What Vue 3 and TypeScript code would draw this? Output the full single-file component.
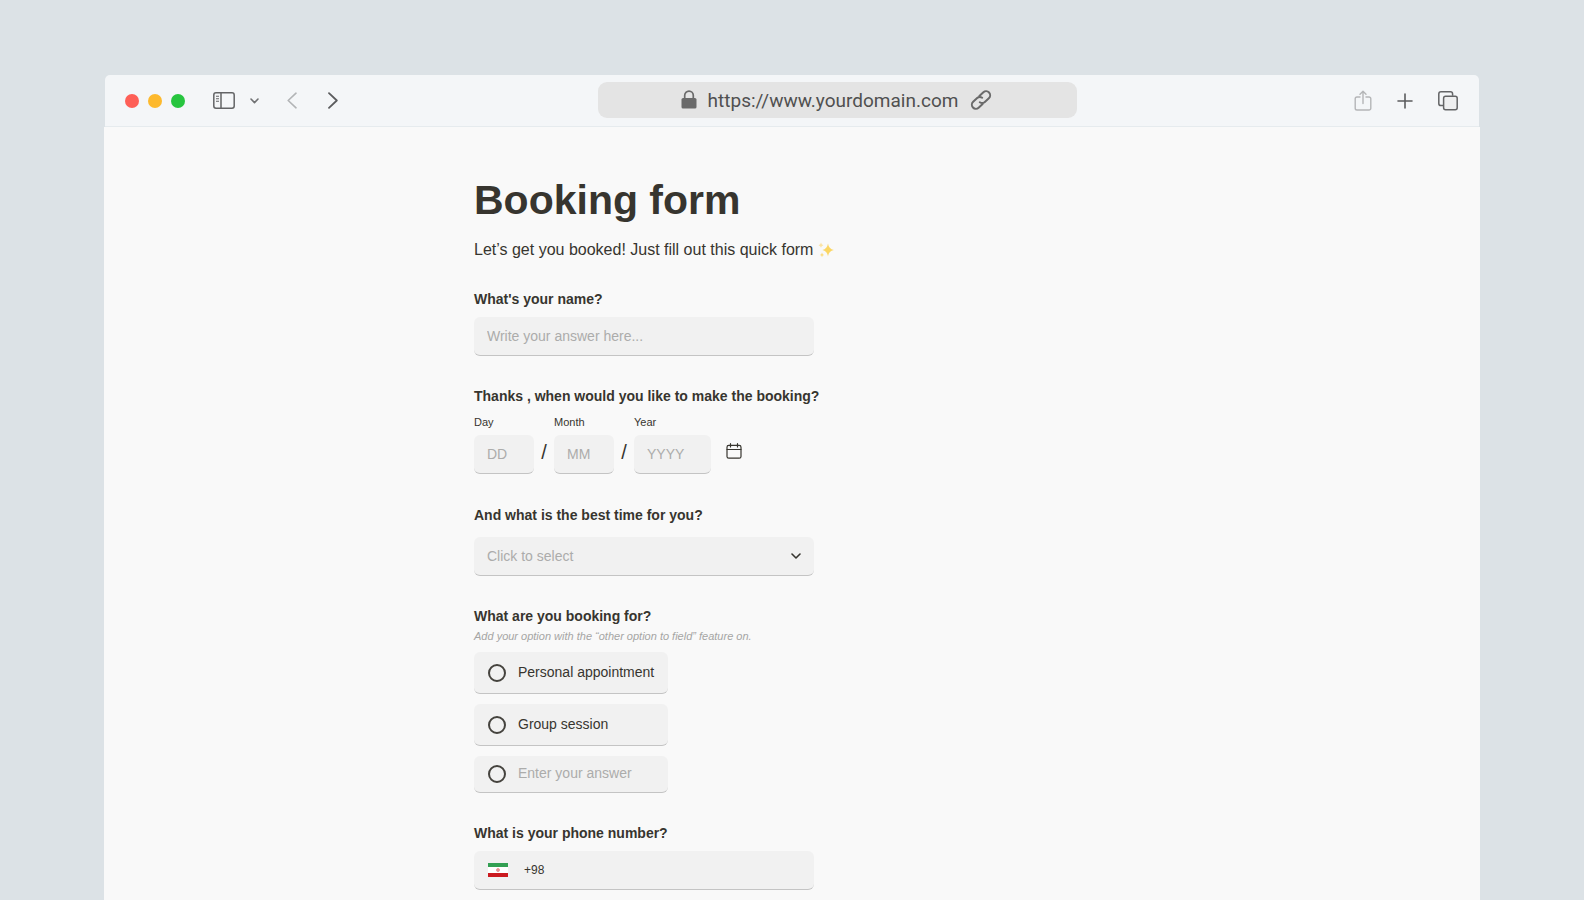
<script setup lang="ts">
import { ref } from 'vue'

interface DatePart {
  id: string
  label: string
  placeholder: string
  wide: boolean
}

interface Option {
  id: string
  label: string
}

const dateParts: DatePart[] = [
  { id: 'day', label: 'Day', placeholder: 'DD', wide: false },
  { id: 'month', label: 'Month', placeholder: 'MM', wide: false },
  { id: 'year', label: 'Year', placeholder: 'YYYY', wide: true },
]

const options: Option[] = [
  { id: 'personal', label: 'Personal appointment' },
  { id: 'group', label: 'Group session' },
]

const address = ref('https://www.yourdomain.com')
const fullName = ref('')
const date = ref<Record<string, string>>({ day: '', month: '', year: '' })
const time = ref('')
const purpose = ref('')
const otherPurpose = ref('')
const phone = ref('+98')
</script>

<template>
  <div class="page">
    <div class="window">
      <header class="toolbar">
        <div class="tools tools-start">
          <div class="lights">
            <button type="button" class="light red" aria-label="Close"></button>
            <button type="button" class="light yellow" aria-label="Minimise"></button>
            <button type="button" class="light green" aria-label="Zoom"></button>
          </div>
          <button type="button" class="tool sidebar" aria-label="Sidebar">
            <svg width="22" height="17" viewBox="0 0 22 17" fill="none" stroke="#636466" stroke-width="1.5">
              <rect x="0.8" y="0.8" width="20.4" height="15.4" rx="2.2" />
              <path d="M8 1v15" />
              <path d="M3 4.2h3M3 6.7h3M3 9.2h3" stroke-width="1.1" />
            </svg>
          </button>
          <button type="button" class="tool chevron" aria-label="Tab groups">
            <svg width="9" height="6" viewBox="0 0 9 6" fill="none" stroke="#707173" stroke-width="1.6" stroke-linecap="round" stroke-linejoin="round">
              <path d="M1 1l3.5 3.6L8 1" />
            </svg>
          </button>
          <button type="button" class="tool back" aria-label="Back">
            <svg width="10" height="17" viewBox="0 0 10 17" fill="none" stroke="#b2b4b6" stroke-width="1.6" stroke-linecap="round" stroke-linejoin="round">
              <path d="M9 1.2L1.2 8.5L9 15.8" />
            </svg>
          </button>
          <button type="button" class="tool forward" aria-label="Forward">
            <svg width="10" height="17" viewBox="0 0 10 17" fill="none" stroke="#5b5c5e" stroke-width="1.8" stroke-linecap="round" stroke-linejoin="round">
              <path d="M1 1.2L8.8 8.5L1 15.8" />
            </svg>
          </button>
        </div>

        <div class="address">
          <svg width="16" height="19" viewBox="0 0 16 19" aria-hidden="true">
            <rect x="0.5" y="8" width="15" height="10.5" rx="1.6" fill="#6a6a6a" />
            <path d="M3.7 9V5.4a4.3 4.3 0 0 1 8.6 0V9" fill="none" stroke="#6a6a6a" stroke-width="1.7" />
          </svg>
          <input v-model="address" class="address-input" type="text" aria-label="Address" />
          <svg width="24" height="24" viewBox="0 0 24 24" fill="none" stroke="#6a6a6a" stroke-width="2" stroke-linecap="round" stroke-linejoin="round" aria-hidden="true">
            <g transform="rotate(-43 12 12)">
              <path d="M10.500 16H5a4 4 0 0 1 0-8h5.500a4 4 0 0 1 3.900 3.200" />
              <path d="M13.500 8H19a4 4 0 0 1 0 8h-5.500a4 4 0 0 1-3.900-3.200" />
            </g>
          </svg>
        </div>

        <div class="tools tools-end">
          <button type="button" class="tool" aria-label="Share">
            <svg width="18" height="22" viewBox="0 0 18 22" fill="none" stroke="#b4b5b7" stroke-width="1.4" stroke-linecap="round" stroke-linejoin="round">
              <path d="M6 7H3a1.8 1.8 0 0 0-1.8 1.8v9.4A1.8 1.8 0 0 0 3 20h12a1.8 1.8 0 0 0 1.8-1.8V8.8A1.8 1.8 0 0 0 15 7h-3" />
              <path d="M9 13.5V1.5M6 4.2L9 1.2l3 3" />
            </svg>
          </button>
          <button type="button" class="tool" aria-label="New tab">
            <svg width="16" height="16" viewBox="0 0 16 16" fill="none" stroke="#5b5c5e" stroke-width="1.6" stroke-linecap="round">
              <path d="M8 1v14M1 8h14" />
            </svg>
          </button>
          <button type="button" class="tool" aria-label="Tab overview">
            <svg width="20" height="20" viewBox="0 0 20 20" fill="none" stroke="#636466" stroke-width="1.5" stroke-linejoin="round">
              <path d="M5.6 14.6H3A2.2 2.2 0 0 1 .8 12.400V3A2.200 2.200 0 0 1 3 .8h9.400A2.200 2.200 0 0 1 14.600 3v1.800" />
              <rect x="5.600" y="5.200" width="13.600" height="13.600" rx="2" fill="#eeeff0" />
            </svg>
          </button>
        </div>
      </header>

      <main class="content">
        <form class="form" @submit.prevent>
          <h1 class="title">Booking form</h1>
          <p class="intro">
            Let’s get you booked! Just fill out this quick form
            <svg class="sparkles" width="16" height="16" viewBox="0 0 16 16" role="img" aria-label="sparkles">
              <path d="M10 1.600Q10.700 7 15.800 8Q10.700 9 10 14.400Q9.200 9 4.400 8Q9.200 7 10 1.600Z" fill="#fbd663" />
              <path d="M3 .6Q3.300 2.700 5.400 3.200Q3.300 3.700 3 5.800Q2.600 3.700 .6 3.200Q2.600 2.700 3 .6Z" fill="#fbe3a4" />
              <path d="M4 10.600Q4.300 12.400 6 12.900Q4.300 13.400 4 15.200Q3.700 13.400 2 12.900Q3.700 12.400 4 10.600Z" fill="#fbdc84" />
            </svg>
          </p>

          <div class="question">
            <label class="label" for="name">What's your name?</label>
            <input id="name" v-model="fullName" class="field" type="text" placeholder="Write your answer here..." />
          </div>

          <fieldset class="question">
            <legend class="label">Thanks , when would you like to make the booking?</legend>
            <div class="date">
              <template v-for="(part, index) in dateParts" :key="part.id">
                <span v-if="index > 0" class="slash">/</span>
                <div class="date-part" :class="{ wide: part.wide }">
                  <label class="small-label" :for="part.id">{{ part.label }}</label>
                  <input :id="part.id" v-model="date[part.id]" class="field" type="text" inputmode="numeric" :placeholder="part.placeholder" />
                </div>
              </template>
              <button type="button" class="calendar" aria-label="Open calendar">
                <svg width="16" height="16" viewBox="0 0 16 16" fill="none" stroke="#37352f" stroke-width="1.2" stroke-linecap="round">
                  <rect x="1" y="2.400" width="14" height="12.800" rx="1.800" />
                  <path d="M1 6.500h14M4.500 .7v3.200M11.500 .7v3.200" />
                </svg>
              </button>
            </div>
          </fieldset>

          <div class="question">
            <label class="label" for="time">And what is the best time for you?</label>
            <div class="select">
              <select id="time" v-model="time" class="field">
                <option value="">Click to select</option>
                <option value="morning">Morning</option>
                <option value="afternoon">Afternoon</option>
              </select>
              <svg class="select-arrow" width="10" height="6" viewBox="0 0 10 6" fill="none" stroke="#37352f" stroke-width="1.600" stroke-linecap="round" stroke-linejoin="round" aria-hidden="true">
                <path d="M1 1l4 4l4-4" />
              </svg>
            </div>
          </div>

          <fieldset class="question">
            <legend class="label">What are you booking for?</legend>
            <p class="hint">Add your option with the “other option to field” feature on.</p>
            <div class="options">
              <label v-for="option in options" :key="option.id" class="option">
                <input v-model="purpose" class="radio" type="radio" name="purpose" :value="option.id" />
                <span class="option-text">{{ option.label }}</span>
              </label>
              <div class="option other">
                <input v-model="purpose" class="radio" type="radio" name="purpose" value="other" aria-label="Other" />
                <input v-model="otherPurpose" class="other-input" type="text" placeholder="Enter your answer" aria-label="Other answer" />
              </div>
            </div>
          </fieldset>

          <div class="question">
            <label class="label" for="phone">What is your phone number?</label>
            <div class="field phone">
              <button type="button" class="flag" aria-label="Country: Iran">
                <svg width="20" height="14" viewBox="0 0 20 14">
                  <rect width="20" height="14" fill="#ffffff" />
                  <rect width="20" height="4" fill="#33a053" />
                  <rect y="10" width="20" height="4" fill="#cb1a20" />
                  <circle cx="10" cy="7" r="1.500" fill="#eb9a9c" stroke="#e06c70" stroke-width="0.600" />
                </svg>
              </button>
              <input id="phone" v-model="phone" class="phone-input" type="tel" />
            </div>
          </div>
        </form>
      </main>
    </div>
  </div>
</template>

<style>
body {
  margin: 0;
  background: #dce2e6;
}
</style>

<style scoped>
.page {
  box-sizing: border-box;
  display: flex;
  flex-direction: column;
  min-height: 100vh;
  padding: 75px 104px 0;
  background: #dce2e6;
  color: #37352f;
  font-family: "Liberation Sans", Arial, sans-serif;
  font-size: 14px;
}

button,
input,
select {
  margin: 0;
  padding: 0;
  border: 0;
  background: none;
  color: inherit;
  font: inherit;
}

fieldset {
  min-width: 0;
  margin: 0;
  padding: 0;
  border: 0;
}

legend {
  padding: 0;
}

.window {
  display: flex;
  flex: 1;
  flex-direction: column;
}

.toolbar {
  box-sizing: border-box;
  display: grid;
  grid-template-columns: 21fr minmax(0, 479px) 17fr;
  align-items: center;
  height: 52px;
  margin: 0 1px;
  padding: 0 20px;
  border-bottom: 1px solid #e6ebee;
  border-radius: 5px 5px 0 0;
  background: #f4f6f8;
}

.tools {
  display: flex;
  align-items: center;
}

.tools-end {
  justify-content: flex-end;
  gap: 25px;
  padding-right: 1px;
}

.lights {
  display: flex;
  gap: 9px;
}

.light {
  width: 14px;
  height: 14px;
  border-radius: 50%;
}

.red {
  background: #fe5f57;
}

.yellow {
  background: #fdb92d;
}

.green {
  background: #27c53f;
}

.tool {
  display: flex;
}

.sidebar {
  margin-left: 28px;
}

.chevron {
  margin-left: 15px;
}

.back {
  margin-left: 28px;
}

.forward {
  margin-left: 31px;
}

.address {
  display: flex;
  align-items: center;
  justify-content: center;
  gap: 8px;
  height: 36px;
  margin-bottom: 2px;
  border-radius: 9px;
  background: #e4e4e4;
}

.address-input {
  width: 256px;
  padding-top: 2px;
  color: #505050;
  font-family: Roboto, sans-serif;
  font-size: 19px;
  text-align: center;
}

.content {
  flex: 1;
  padding: 49px 24px 8px;
  background: #f9f9f9;
}

.form {
  max-width: 636px;
  margin: 0 auto;
}

.title {
  margin: 0;
  font-size: 41px;
  line-height: 48px;
}

.intro {
  margin: 17px 0 0;
  font-size: 16px;
  line-height: 18px;
}

.sparkles {
  vertical-align: -3px;
}

.question {
  width: 340px;
  max-width: 100%;
  margin-top: 30px;
}

.label {
  display: block;
  font-weight: 700;
  line-height: 20px;
  white-space: nowrap;
}

.field {
  box-sizing: border-box;
  display: block;
  width: 100%;
  height: 39px;
  padding: 0 13px;
  border-bottom: 1px solid #c4c4c4;
  border-radius: 6px;
  background: #f1f1f1;
}

input::placeholder {
  color: #acacab;
  opacity: 1;
}

.question > .field {
  margin-top: 8px;
}

.date {
  display: flex;
  align-items: flex-end;
  padding: 9px 0 1px;
}

.date-part {
  width: 60px;
}

.date-part.wide {
  width: 77px;
}

.small-label {
  display: block;
  margin-bottom: 6px;
  font-size: 11px;
  line-height: 14px;
}

.slash {
  width: 20px;
  font-size: 20px;
  line-height: 44px;
  text-align: center;
}

.calendar {
  display: flex;
  margin: 0 0 15px 15px;
}

.select {
  position: relative;
  margin-top: 12px;
}

.select .field {
  appearance: none;
  color: #acacab;
}

.select-arrow {
  position: absolute;
  top: 16px;
  right: 13px;
  pointer-events: none;
}

.hint {
  margin: 3px 0 0;
  color: #a5a5a4;
  font-size: 11px;
  font-style: italic;
  line-height: 14px;
}

.options {
  display: flex;
  flex-direction: column;
  gap: 10px;
  width: 194px;
  margin-top: 9px;
}

.option {
  box-sizing: border-box;
  display: flex;
  align-items: center;
  gap: 12px;
  height: 42px;
  padding: 0 14px;
  border-bottom: 1px solid #c4c4c4;
  border-radius: 6px;
  background: #f1f1f1;
}

.other {
  height: 37px;
}

.radio {
  box-sizing: border-box;
  flex: none;
  width: 18px;
  height: 18px;
  border: 2px solid #45433e;
  border-radius: 50%;
  appearance: none;
}

.radio:checked {
  background: radial-gradient(#45433e 4px, transparent 5px);
}

.option-text,
.other-input {
  padding-bottom: 2px;
  white-space: nowrap;
}

.other-input {
  min-width: 0;
  flex: 1;
}

.phone {
  display: flex;
  align-items: center;
  gap: 16px;
  padding: 0 14px;
}

.flag {
  display: flex;
}

.phone-input {
  min-width: 0;
  flex: 1;
  font-size: 12px;
}
</style>
